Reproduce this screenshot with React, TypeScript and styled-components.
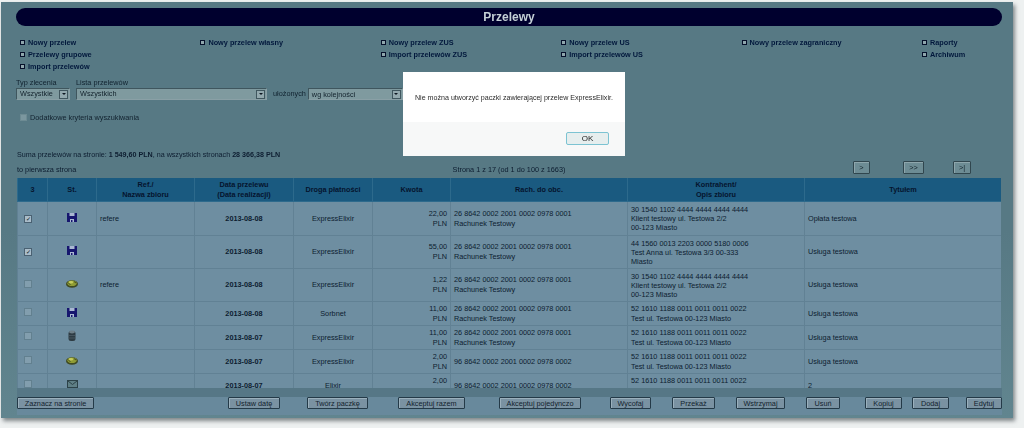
import React from "react";
import styled, { createGlobalStyle } from "styled-components";

const Global = createGlobalStyle`
  html, body { margin: 0; padding: 0; background: #eef1f1; }
  body { width: 1024px; height: 428px; overflow: hidden; font-family: "Liberation Sans", Arial, sans-serif; }
`;

const Stage = styled.div`
  position: relative;
  width: 1024px;
  height: 428px;
  overflow: hidden;
`;

const Panel = styled.main`
  margin: 2px 0 0 1px;
  width: 1012px;
  height: 416px;
  background: linear-gradient(#577984 55%, #61858f);
  box-shadow: 2px 3px 4px rgba(40, 50, 55, 0.55);
  display: flex;
  flex-direction: column;
  color: #0d1d30;
  font-size: 7.3px;
  filter: blur(0.35px);
`;

const TitleBar = styled.h1`
  margin: 6px 11px 0 15px;
  height: 18px;
  border-radius: 9px;
  background: #00002e;
  color: #c4d0d6;
  font-size: 12px;
  font-weight: bold;
  line-height: 18px;
  text-align: center;
`;

const Links = styled.nav`
  margin: 10px 0 0 19px;
  display: grid;
  grid-template-columns: repeat(5, 180.4px) 1fr;
  height: 36px;
`;

const LinkColumn = styled.div`
  display: flex;
  flex-direction: column;
`;

const LinkItem = styled.a`
  height: 12px;
  display: flex;
  align-items: center;
  gap: 3px;
  font-weight: bold;
  color: #02183c;
  white-space: nowrap;
`;

const Bullet = styled.span`
  width: 3px;
  height: 3px;
  border: 1.5px solid #06102a;
  background: #8fa6ac;
  flex: none;
`;

const Filters = styled.section`
  margin: 6px 0 0 15px;
  display: flex;
  align-items: flex-end;
`;

const Field = styled.label<{ $ml: number }>`
  margin-left: ${(p) => p.$ml}px;
  display: flex;
  flex-direction: column;
  line-height: 10px;
  color: #10222f;
`;

const Select = styled.div<{ $w: number }>`
  width: ${(p) => p.$w}px;
  height: 12px;
  box-sizing: border-box;
  border: 1px solid #3f565e;
  border-right-color: #8aa0a6;
  border-bottom-color: #8aa0a6;
  background: #7f9a9f;
  display: flex;
  align-items: center;
  justify-content: space-between;
  padding: 0 1px 0 3px;
  color: #12222c;
`;

const Arrow = styled.span`
  width: 9px;
  height: 9px;
  background: #93a9ae;
  border: 1px solid #40575f;
  box-sizing: border-box;
  display: flex;
  align-items: center;
  justify-content: center;
  &::after {
    content: "";
    border: 2px solid transparent;
    border-top: 2.5px solid #0c1620;
    border-bottom: 0;
  }
`;

const InlineLabel = styled.span`
  margin: 0 2px 0 6px;
  line-height: 12px;
  color: #10222f;
`;

const Extra = styled.div`
  margin: 12px 0 0 19px;
  height: 10px;
  display: flex;
  align-items: center;
  gap: 3px;
  color: #12222f;
`;

const DimBox = styled.span`
  width: 7px;
  height: 7px;
  box-sizing: border-box;
  background: #7b979f;
  border: 1px solid #6d8b93;
`;

const Summary = styled.p`
  margin: 28px 0 0 16px;
  line-height: 10px;
  height: 10px;
  font-size: 7.15px;
`;

const Pager = styled.div`
  height: 18px;
  margin-left: 16px;
  width: 984px;
  display: grid;
  grid-template-columns: 1fr 1fr 1fr;
  align-items: center;
`;

const PagerCenter = styled.span`
  text-align: center;
`;

const PagerButtons = styled.div`
  display: flex;
  justify-content: flex-end;
  padding-right: 30px;
  margin-top: -4px;
`;

const NavButton = styled.button<{ $w: number; $ml: number }>`
  width: ${(p) => p.$w}px;
  height: 13px;
  margin-left: ${(p) => p.$ml}px;
  padding: 0;
  background: #6d8c94;
  border: 1px solid #30464e;
  border-radius: 1px;
  box-shadow: inset 1px 1px 0 #8ea6ac;
  font: 7.3px "Liberation Sans", Arial, sans-serif;
  color: #14242c;
`;

const TableWrap = styled.div`
  margin-left: 16px;
  width: 984px;
  height: 210px;
  overflow: hidden;
`;

const Table = styled.table`
  width: 984px;
  border-collapse: collapse;
  table-layout: fixed;
  background: #6e8ea1;
`;

const Head = styled.th`
  height: 23px;
  padding: 0;
  background: #1a5a80;
  border: 1px solid #2d6a8c;
  border-top: 0;
  color: #05142e;
  font-weight: bold;
  line-height: 10px;
  text-align: center;
  white-space: pre-line;
`;

const Row = styled.tr<{ $h: number }>`
  height: ${(p) => p.$h}px;
`;

const Cell = styled.td<{ $align?: string; $bold?: boolean; $lh?: number }>`
  padding: 0 3px;
  border: 1px solid #618194;
  text-align: ${(p) => p.$align || "left"};
  font-weight: ${(p) => (p.$bold ? "bold" : "normal")};
  line-height: ${(p) => p.$lh || 10}px;
  color: #0d1d30;
  white-space: pre-line;
  overflow: hidden;
`;

const Mark = styled.span<{ $on?: boolean }>`
  display: inline-flex;
  align-items: center;
  justify-content: center;
  box-sizing: border-box;
  width: 8px;
  height: 8px;
  margin-left: 3px;
  background: ${(p) => (p.$on ? "#a9bcc9" : "#829eae")};
  border: 1px solid ${(p) => (p.$on ? "#4a6172" : "#62808f")};
  color: #0a1420;
  font-size: 6px;
  line-height: 6px;
`;

const Actions = styled.footer`
  margin-left: 16px;
  width: 985px;
  height: 27px;
  background: #68899c;
  border-top: 9px solid #567786;
  display: flex;
  align-items: flex-start;
  box-sizing: border-box;
`;

const ActionButton = styled.button<{ $w: number; $ml: number }>`
  width: ${(p) => p.$w}px;
  height: 12px;
  margin-left: ${(p) => p.$ml}px;
  flex: none;
  padding: 0;
  background: #7a92a2;
  border: 1px solid #243a48;
  border-radius: 1px;
  box-shadow: inset 1px 1px 0 #9bb0bc;
  font: 7.3px "Liberation Sans", Arial, sans-serif;
  color: #12222e;
  white-space: nowrap;
`;

const Dialog = styled.div`
  position: absolute;
  left: 403px;
  top: 72px;
  width: 222px;
  height: 84px;
  background: #fff;
  color: #2b2b2b;
  font-size: 7.1px;
  display: flex;
  flex-direction: column;
  filter: blur(0.25px);
`;

const DialogBody = styled.div`
  height: 50px;
  padding: 21px 0 0 12px;
  box-sizing: border-box;
  line-height: 10px;
`;

const DialogFoot = styled.div`
  flex: 1;
  background: #f7f8f8;
  display: flex;
  justify-content: flex-end;
  align-items: flex-start;
  padding: 10px 16px 0 0;
`;

const OkButton = styled.button`
  width: 43px;
  height: 13px;
  padding: 0;
  background: #e6eeee;
  border: 1.5px solid #7cc3d2;
  border-radius: 2px;
  font: 8px "Liberation Sans", Arial, sans-serif;
  color: #222;
`;

const Floppy = () => (
  <svg width="10" height="9" viewBox="0 0 10 9">
    <rect width="10" height="9" fill="#16166e" />
    <rect x="2.5" y="0" width="5" height="3" fill="#aab8d2" />
    <rect x="3" y="6" width="4" height="3" fill="#aab8d2" />
    <rect x="4" y="7" width="1.5" height="2" fill="#16166e" />
  </svg>
);
const Coins = () => (
  <svg width="12" height="9" viewBox="0 0 12 9">
    <ellipse cx="6" cy="5" rx="6" ry="3.8" fill="#3f4a22" />
    <ellipse cx="6" cy="4.2" rx="4.6" ry="2.8" fill="#8f9c34" />
    <ellipse cx="5" cy="3.2" rx="2.2" ry="1.2" fill="#c6cc5e" />
    <path d="M2 3.5l2.5 2.5M8 2.5l2 1.5" stroke="#2e3a22" strokeWidth="0.8" fill="none" />
  </svg>
);
const Drum = () => (
  <svg width="8" height="12" viewBox="0 0 8 12">
    <rect x="0.5" y="1" width="7" height="10" rx="2.5" fill="#2e3c44" />
    <ellipse cx="4" cy="2" rx="3" ry="1.4" fill="#6e7f88" />
    <path d="M1 5.5h6M1 8h6" stroke="#55656e" strokeWidth="0.6" />
  </svg>
);
const Envelope = () => (
  <svg width="11" height="8" viewBox="0 0 11 8">
    <rect x="0.5" y="0.5" width="10" height="7" fill="#5f7f85" stroke="#2c4248" />
    <path d="M1 1l4.5 3.5L10 1" fill="none" stroke="#2c4248" />
  </svg>
);

const linkCols = [
  ["Nowy przelew", "Przelewy grupowe", "Import przelewów"],
  ["Nowy przelew własny"],
  ["Nowy przelew ZUS", "Import przelewów ZUS"],
  ["Nowy przelew US", "Import przelewów US"],
  ["Nowy przelew zagraniczny"],
  ["Raporty", "Archiwum"],
];

const acct1 = "26 8642 0002 2001 0002 0978 0001\nRachunek Testowy";
const acct2 = "96 8642 0002 2001 0002 0978 0002";
const k1 = "30 1540 1102 4444 4444 4444 4444\nKlient testowy ul. Testowa 2/2\n00-123 Miasto";
const k2 = "44 1560 0013 2203 0000 5180 0006\nTest Anna ul. Testowa 3/3 00-333\nMiasto";
const k3 = "52 1610 1188 0011 0011 0011 0022\nTest ul. Testowa 00-123 Miasto";

const rows = [
  { h: 34, lh: 9, on: true, icon: <Floppy />, ref: "refere", date: "2013-08-08", way: "ExpressElixir", amt: "22,00", acct: acct1, k: k1, t: "Opłata testowa" },
  { h: 33, lh: 9, on: true, icon: <Floppy />, ref: "", date: "2013-08-08", way: "ExpressElixir", amt: "55,00", acct: acct1, k: k2, t: "Usługa testowa" },
  { h: 33, lh: 9, on: false, icon: <Coins />, ref: "refere", date: "2013-08-08", way: "ExpressElixir", amt: "1,22", acct: acct1, k: k1, t: "Usługa testowa" },
  { h: 24, lh: 10, on: false, icon: <Floppy />, ref: "", date: "2013-08-08", way: "Sorbnet", amt: "11,00", acct: acct1, k: k3, t: "Usługa testowa" },
  { h: 24, lh: 10, on: false, icon: <Drum />, ref: "", date: "2013-08-07", way: "ExpressElixir", amt: "11,00", acct: acct1, k: k3, t: "Usługa testowa" },
  { h: 24, lh: 10, on: false, icon: <Coins />, ref: "", date: "2013-08-07", way: "ExpressElixir", amt: "2,00", acct: acct2, k: k3, t: "Usługa testowa" },
  { h: 24, lh: 10, on: false, icon: <Envelope />, ref: "", date: "2013-08-07", way: "Elixir", amt: "2,00", acct: acct2, k: k3, t: "2" },
];

const widths = [30, 49, 98, 99, 79, 78, 177, 177, 197];
const heads = ["3", "St.", "Ref./\nNazwa zbioru", "Data przelewu\n(Data realizacji)", "Droga płatności", "Kwota", "Rach. do obc.", "Kontrahent/\nOpis zbioru", "Tytułem"];

const actions = [
  { t: "Zaznacz na stronie", w: 77, ml: 0 },
  { t: "Ustaw datę", w: 52, ml: 134 },
  { t: "Twórz paczkę", w: 61, ml: 27 },
  { t: "Akceptuj razem", w: 67, ml: 30 },
  { t: "Akceptuj pojedynczo", w: 82, ml: 34 },
  { t: "Wycofaj", w: 41, ml: 29 },
  { t: "Przekaż", w: 43, ml: 21 },
  { t: "Wstrzymaj", w: 49, ml: 21 },
  { t: "Usuń", w: 34, ml: 21 },
  { t: "Kopiuj", w: 37, ml: 25 },
  { t: "Dodaj", w: 37, ml: 10 },
  { t: "Edytuj", w: 36, ml: 17 },
];

export default function App() {
  return (
    <Stage>
      <Global />
      <Panel>
        <TitleBar>Przelewy</TitleBar>
        <Links>
          {linkCols.map((col, i) => (
            <LinkColumn key={i}>
              {col.map((l) => (
                <LinkItem key={l}>
                  <Bullet />
                  {l}
                </LinkItem>
              ))}
            </LinkColumn>
          ))}
        </Links>
        <Filters>
          <Field $ml={0}>
            Typ zlecenia
            <Select $w={54}>
              Wszystkie
              <Arrow />
            </Select>
          </Field>
          <Field $ml={6}>
            Lista przelewów
            <Select $w={191}>
              Wszystkich
              <Arrow />
            </Select>
          </Field>
          <InlineLabel>ułożonych</InlineLabel>
          <Select $w={95}>
            wg kolejności
            <Arrow />
          </Select>
        </Filters>
        <Extra>
          <DimBox />
          Dodatkowe kryteria wyszukiwania
        </Extra>
        <Summary>
          Suma przelewów na stronie: <b>1 549,60 PLN</b>, na wszystkich stronach <b>28 366,38 PLN</b>
        </Summary>
        <Pager>
          <span>to pierwsza strona</span>
          <PagerCenter>Strona 1 z 17 (od 1 do 100 z 1663)</PagerCenter>
          <PagerButtons>
            <NavButton $w={17} $ml={0}>&gt;</NavButton>
            <NavButton $w={21} $ml={33}>&gt;&gt;</NavButton>
            <NavButton $w={18} $ml={29}>&gt;|</NavButton>
          </PagerButtons>
        </Pager>
        <TableWrap>
          <Table>
            <colgroup>
              {widths.map((w, i) => (
                <col key={i} style={{ width: w }} />
              ))}
            </colgroup>
            <thead>
              <tr>
                {heads.map((h) => (
                  <Head key={h}>{h}</Head>
                ))}
              </tr>
            </thead>
            <tbody>
              {rows.map((r, i) => (
                <Row key={i} $h={r.h}>
                  <Cell>
                    <Mark $on={r.on}>{r.on ? "✓" : ""}</Mark>
                  </Cell>
                  <Cell $align="center">{r.icon}</Cell>
                  <Cell>{r.ref}</Cell>
                  <Cell $align="center" $bold>
                    {r.date}
                  </Cell>
                  <Cell $align="center">{r.way}</Cell>
                  <Cell $align="right">{r.amt + "\nPLN"}</Cell>
                  <Cell>{r.acct}</Cell>
                  <Cell $lh={r.lh}>{r.k}</Cell>
                  <Cell>{r.t}</Cell>
                </Row>
              ))}
            </tbody>
          </Table>
        </TableWrap>
        <Actions>
          {actions.map((a) => (
            <ActionButton key={a.t} $w={a.w} $ml={a.ml}>
              {a.t}
            </ActionButton>
          ))}
        </Actions>
      </Panel>
      <Dialog>
        <DialogBody>Nie można utworzyć paczki zawierającej przelew ExpressElixir.</DialogBody>
        <DialogFoot>
          <OkButton>OK</OkButton>
        </DialogFoot>
      </Dialog>
    </Stage>
  );
}
